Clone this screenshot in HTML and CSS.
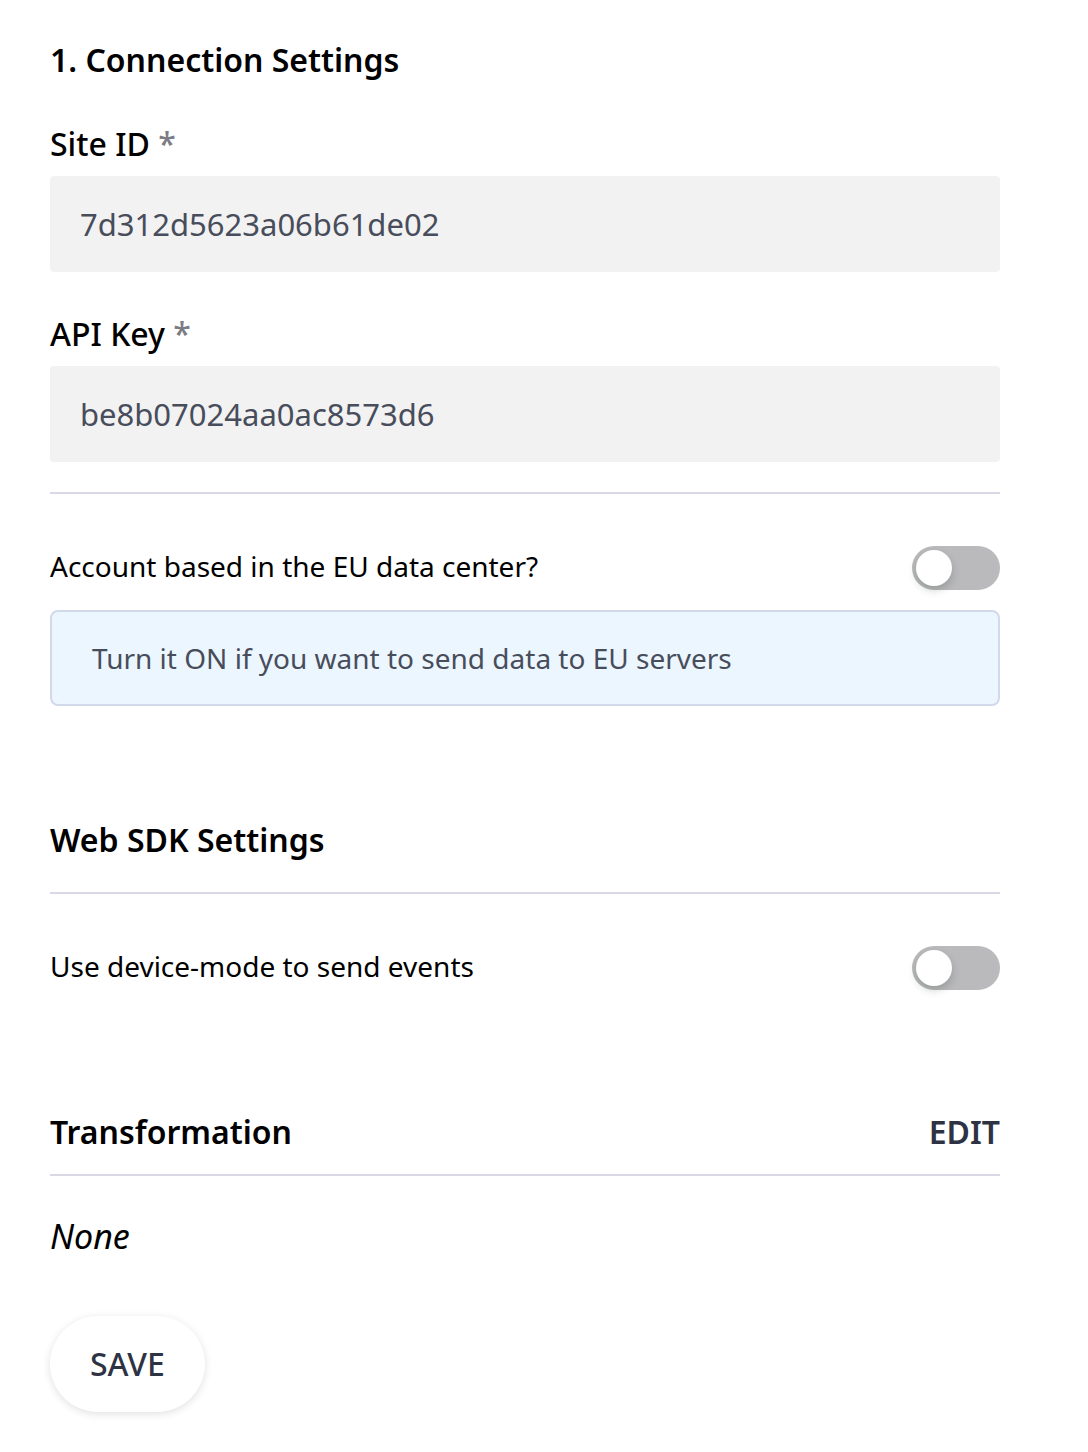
FILE: index.html
```html
<!DOCTYPE html>
<html lang="en">
<head>
<meta charset="utf-8">
<meta name="viewport" content="width=device-width, initial-scale=1">
<title>Connection Settings</title>
<link rel="stylesheet" href="styles.css">
</head>
<body>
<form class="settings">
  <section class="connection">
    <h2 class="heading">1. Connection Settings</h2>
    <div class="field">
      <label class="field-label" for="site-id">Site ID <span class="required">*</span></label>
      <input class="field-input" id="site-id" type="text" value="7d312d5623a06b61de02">
    </div>
    <div class="field">
      <label class="field-label" for="api-key">API Key <span class="required">*</span></label>
      <input class="field-input" id="api-key" type="text" value="be8b07024aa0ac8573d6">
    </div>
    <div class="toggle-row">
      <label for="eu">Account based in the EU data center?</label>
      <input class="switch" id="eu" type="checkbox" role="switch">
    </div>
    <p class="hint">Turn it ON if you want to send data to EU servers</p>
  </section>
  <section class="sdk">
    <h2 class="heading">Web SDK Settings</h2>
    <div class="toggle-row">
      <label for="device-mode">Use device-mode to send events</label>
      <input class="switch" id="device-mode" type="checkbox" role="switch">
    </div>
  </section>
  <section class="transformation">
    <div class="section-head">
      <h2 class="heading">Transformation</h2>
      <button class="edit" type="button">EDIT</button>
    </div>
    <p class="none">None</p>
  </section>
  <button class="save" type="submit">SAVE</button>
</form>
</body>
</html>
```

FILE: styles.css
```css
* {
  box-sizing: border-box;
}

body {
  margin: 0;
  background: #fff;
  color: #000;
  font-family: "Noto Sans", sans-serif;
}

.settings {
  padding: 38px 88px 38px 50px;
}

.heading {
  margin: 0;
  font-size: 32px;
  font-weight: 600;
  line-height: 44px;
}

.field {
  display: flex;
  flex-direction: column;
  gap: 10px;
  margin-top: 40px;
}

.field-label {
  font-size: 32px;
  font-weight: 500;
  line-height: 44px;
}

.required {
  color: #7c7d84;
}

.field-input {
  width: 100%;
  height: 96px;
  padding: 0 30px;
  border: 0;
  border-radius: 4px;
  background: #f2f2f2;
  color: #484d5b;
  font: 400 31px "Noto Sans", sans-serif;
}

.toggle-row {
  display: flex;
  align-items: flex-start;
  justify-content: space-between;
  margin-top: 30px;
  padding-top: 52px;
  border-top: 2px solid #d9d9e6;
  font-size: 28px;
  line-height: 40px;
}

.switch {
  flex: none;
  display: flex;
  width: 88px;
  height: 44px;
  margin: 0;
  padding: 4px;
  border-radius: 22px;
  background: #bababc;
  appearance: none;
}

.switch::before {
  content: "";
  width: 36px;
  height: 36px;
  border-radius: 50%;
  background: #fff;
  box-shadow: 0 4px 8px rgba(0, 35, 11, 0.2);
}

.switch:checked {
  justify-content: flex-end;
  background: #4f5466;
}

.hint {
  margin: 20px 0 0;
  padding: 26px 40px;
  border: 2px solid #d1d9ea;
  border-radius: 8px;
  background: #ecf6ff;
  color: #484d5b;
  font-size: 28px;
  line-height: 40px;
}

.sdk {
  margin-top: 112px;
}

.transformation {
  margin-top: 120px;
}

.section-head {
  display: flex;
  align-items: center;
  justify-content: space-between;
  padding-bottom: 20px;
  border-bottom: 2px solid #d9d9e6;
}

.edit {
  padding: 0;
  border: 0;
  background: none;
  color: #2e3343;
  font: 600 32px/44px "Noto Sans", sans-serif;
}

.none {
  margin: 38px 0 0;
  font-size: 34px;
  font-style: italic;
  line-height: 44px;
}

.save {
  margin-top: 58px;
  padding: 26px 40px;
  border: 0;
  border-radius: 48px;
  background: #fff;
  box-shadow: 0 2px 8px rgba(0, 0, 0, 0.12);
  color: #2e3343;
  font: 500 32px/44px "Noto Sans", sans-serif;
}
```
